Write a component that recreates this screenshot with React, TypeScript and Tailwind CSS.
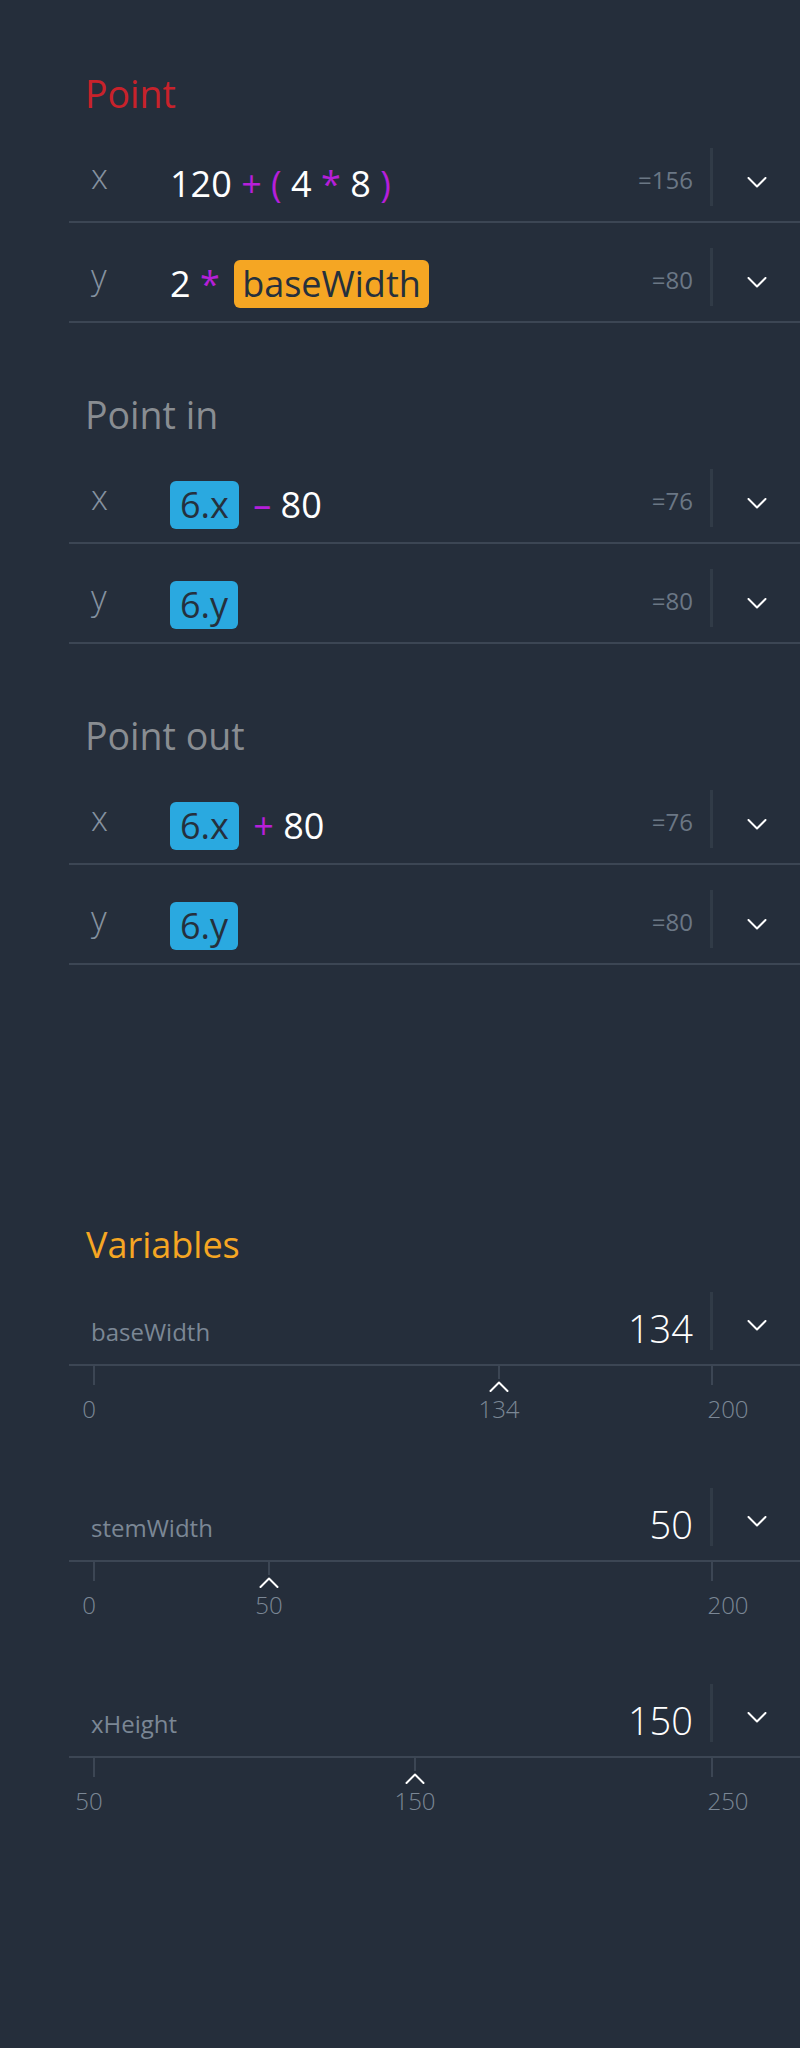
import React from "react";

type Tok = { t: string; k?: "op" | "num" | "var" | "ref" };

function Chevron({ up = false }: { up?: boolean }) {
  return (
    <svg width="20" height="11" viewBox="0 0 20 11" fill="none" stroke="white" strokeWidth="2" strokeLinecap="round" strokeLinejoin="round">
      <polyline points={up ? "1.5,10 10,1.5 18.5,10" : "1.5,1 10,9.5 18.5,1"} />
    </svg>
  );
}

function Expr({ toks }: { toks: Tok[] }) {
  return (
    <>
      {toks.map((tk, i) => {
        const sp = i < toks.length - 1 ? " " : "";
        if (tk.k === "op")
          return (
            <React.Fragment key={i}>
              <span className="text-[#b51fd9]">{tk.t}</span>
              {sp}
            </React.Fragment>
          );
        if (tk.k === "var")
          return (
            <React.Fragment key={i}>
              <span className="ml-[5px] inline-block rounded-md bg-[#f5a623] px-[8px] text-[#25303d]">{tk.t}</span>
              {sp}
            </React.Fragment>
          );
        if (tk.k === "ref")
          return (
            <React.Fragment key={i}>
              <span className="mr-[5px] inline-block rounded-md bg-[#2aa9e0] px-[10px] text-[#25303d]">{tk.t}</span>
              {sp}
            </React.Fragment>
          );
        return (
          <React.Fragment key={i}>
            <span>{tk.t}</span>
            {sp}
          </React.Fragment>
        );
      })}
    </>
  );
}

function ExprRow({ label, result, toks }: { label: string; result: string; toks: Tok[] }) {
  return (
    <div className="flex h-[100px] items-start border-b-2 border-[#3c4654]">
      <div className="mt-[29px] w-[101px] pl-[22px] text-[34px] font-light leading-[48px] text-[#8592a0]">{label}</div>
      <div className="mt-[37px] flex-1 whitespace-pre text-[36px] font-normal leading-[48px] text-white">
        <Expr toks={toks} />
      </div>
      <div className="mt-[41px] text-[24px] font-normal leading-[32px] text-[#6b7785]">{result}</div>
      <div className="ml-[17px] mt-[25px] h-[58px] w-[3px] bg-[#313b47]" />
      <div className="mt-[54px] flex w-[87px] justify-center">
        <Chevron />
      </div>
    </div>
  );
}

function Section({ title, color, rows, first }: { title: string; color: string; rows: { label: string; result: string; toks: Tok[] }[]; first?: boolean }) {
  return (
    <section className={first ? "" : "mt-[68px]"}>
      <div className={"h-[53px] pl-[16px] text-[37.5px] font-medium leading-[48px] " + color}>{title}</div>
      {rows.map((r, i) => (
        <ExprRow key={i} {...r} />
      ))}
    </section>
  );
}

type Variable = { name: string; value: number; min: number; max: number; x: number };

function VariableBlock({ v }: { v: Variable }) {
  const rel = v.x - 69;
  return (
    <div>
      <div className="flex h-[90px] items-start border-b-2 border-[#3c4654]">
        <div className="mt-[40px] flex-1 pl-[22px] text-[24px] font-normal leading-[32px] text-[#7b8795]">{v.name}</div>
        <div className="mt-[28px] text-[38px] font-light leading-[48px] text-white">{v.value}</div>
        <div className="ml-[17px] mt-[16px] h-[58px] w-[3px] bg-[#313b47]" />
        <div className="mt-[44px] flex w-[87px] justify-center">
          <Chevron />
        </div>
      </div>
      <div className="relative h-[106px]">
        <div className="absolute left-[24px] top-0 h-[19px] w-[2px] bg-[#3c4654]" />
        <div className="absolute left-[642px] top-0 h-[19px] w-[2px] bg-[#3c4654]" />
        <div className="absolute top-0 h-[13px] w-[2px] -translate-x-1/2 bg-[#3c4654]" style={{ left: rel }} />
        <div className="absolute top-[15px] -translate-x-1/2 leading-none" style={{ left: rel }}>
          <Chevron up />
        </div>
        <div className="absolute left-[20px] top-[27px] -translate-x-1/2 text-[24px] font-light leading-[32px] text-[#7b8795]">{v.min}</div>
        <div className="absolute left-[659px] top-[27px] -translate-x-1/2 text-[24px] font-light leading-[32px] text-[#7b8795]">{v.max}</div>
        <div className="absolute top-[27px] -translate-x-1/2 text-[24px] font-light leading-[32px] text-[#7b8795]" style={{ left: rel }}>
          {v.value}
        </div>
      </div>
    </div>
  );
}

export default function App() {
  const point = [
    {
      label: "x",
      result: "=156",
      toks: [
        { t: "120" },
        { t: "+", k: "op" },
        { t: "(", k: "op" },
        { t: "4" },
        { t: "*", k: "op" },
        { t: "8" },
        { t: ")", k: "op" },
      ] as Tok[],
    },
    {
      label: "y",
      result: "=80",
      toks: [{ t: "2" }, { t: "*", k: "op" }, { t: "baseWidth", k: "var" }] as Tok[],
    },
  ];
  const pointIn = [
    { label: "x", result: "=76", toks: [{ t: "6.x", k: "ref" }, { t: "–", k: "op" }, { t: "80" }] as Tok[] },
    { label: "y", result: "=80", toks: [{ t: "6.y", k: "ref" }] as Tok[] },
  ];
  const pointOut = [
    { label: "x", result: "=76", toks: [{ t: "6.x", k: "ref" }, { t: "+", k: "op" }, { t: "80" }] as Tok[] },
    { label: "y", result: "=80", toks: [{ t: "6.y", k: "ref" }] as Tok[] },
  ];
  const vars: Variable[] = [
    { name: "baseWidth", value: 134, min: 0, max: 200, x: 499 },
    { name: "stemWidth", value: 50, min: 0, max: 200, x: 269 },
    { name: "xHeight", value: 150, min: 50, max: 250, x: 415 },
  ];
  return (
    <div className="min-h-screen w-full bg-[#252e3b] pl-[69px] pt-[70px] font-['Open_Sans',sans-serif]">
      <Section title="Point" color="text-[#c8222b]" rows={point} first />
      <Section title="Point in" color="text-[#898d92]" rows={pointIn} />
      <Section title="Point out" color="text-[#898d92]" rows={pointOut} />
      <section className="mt-[256px]">
        <div className="h-[55px] pl-[17px] text-[36px] font-normal leading-[48px] text-[#f5a623]">Variables</div>
        {vars.map((v) => (
          <VariableBlock key={v.name} v={v} />
        ))}
      </section>
    </div>
  );
}
